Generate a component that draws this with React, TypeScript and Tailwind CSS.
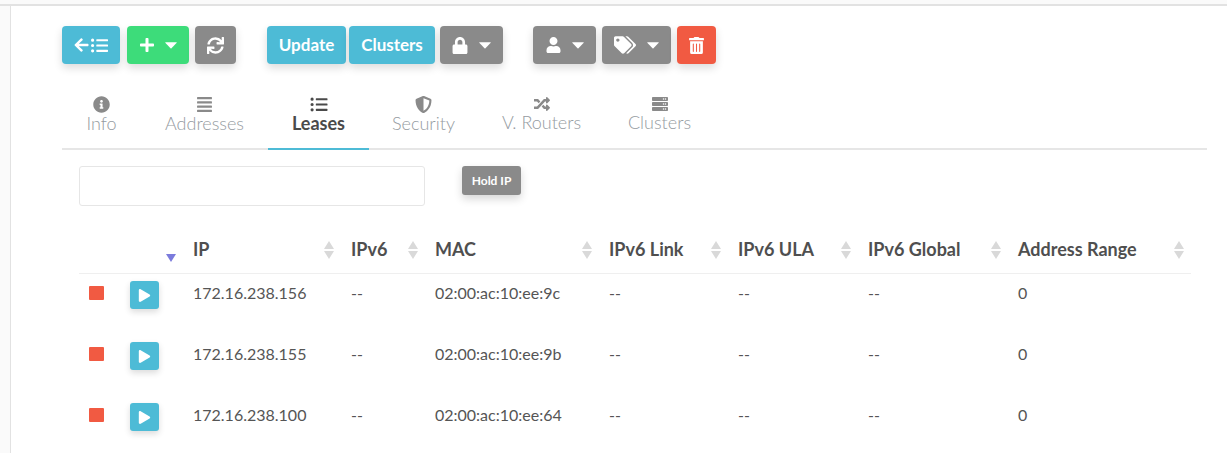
import type { ReactNode } from "react";
import {
  FaArrowLeft,
  FaInfoCircle,
  FaListUl,
  FaLock,
  FaPlay,
  FaPlus,
  FaRandom,
  FaServer,
  FaShieldAlt,
  FaSync,
  FaTags,
  FaTrashAlt,
  FaUser,
  FaAlignJustify,
} from "react-icons/fa";

const btn =
  "flex h-[38px] items-center justify-center rounded-[4px] text-[17px] font-bold text-white shadow-[0_4px_8px_rgba(0,0,0,0.14)]";

function Caret() {
  return (
    <svg viewBox="0 0 13 7" className="h-[7px] w-[12px] shrink-0" fill="currentColor">
      <path d="M0.5 0H12.5Q13 0 12.7 0.5L7 6.6Q6.5 7 6 6.6L0.3 0.5Q0 0 0.5 0Z" />
    </svg>
  );
}

function Toolbar() {
  return (
    <div className="flex items-center">
      <button className={`${btn} w-[58px] gap-[2px] bg-[#4dbbd6]`}>
        <FaArrowLeft className="h-[16px] w-[15px]" />
        <FaListUl className="h-[17px] w-[17px]" />
      </button>
      <button className={`${btn} ml-[7px] w-[62px] gap-[10px] bg-[#3ddc7a]`}>
        <FaPlus className="h-[16px] w-[16px]" />
        <Caret />
      </button>
      <button className={`${btn} ml-[6px] w-[41px] bg-[#8a8a8a]`}>
        <FaSync className="h-[17px] w-[17px]" />
      </button>
      <button className={`${btn} ml-[31px] w-[79px] bg-[#4dbbd6]`}>Update</button>
      <button className={`${btn} ml-[3px] w-[86px] bg-[#4dbbd6]`}>Clusters</button>
      <button className={`${btn} ml-[5px] w-[63px] gap-[11px] bg-[#8a8a8a]`}>
        <FaLock className="h-[17px] w-[16px]" />
        <Caret />
      </button>
      <button className={`${btn} ml-[30px] w-[63px] gap-[11px] bg-[#8a8a8a]`}>
        <FaUser className="h-[16px] w-[15px]" />
        <Caret />
      </button>
      <button className={`${btn} ml-[6px] w-[69px] gap-[11px] bg-[#8a8a8a]`}>
        <FaTags className="h-[18px] w-[22px]" />
        <Caret />
      </button>
      <button className={`${btn} ml-[6px] w-[39px] bg-[#f15a42]`}>
        <FaTrashAlt className="h-[17px] w-[15px]" />
      </button>
    </div>
  );
}

const tabs: { label: string; icon: ReactNode; width: string; active?: boolean }[] = [
  { label: "Info", icon: <FaInfoCircle className="h-[17px] w-[17px]" />, width: "w-[79px]" },
  { label: "Addresses", icon: <FaAlignJustify className="h-[17px] w-[17px]" />, width: "w-[127px]" },
  { label: "Leases", icon: <FaListUl className="h-[17px] w-[18px]" />, width: "w-[101px]", active: true },
  { label: "Security", icon: <FaShieldAlt className="h-[17px] w-[17px]" />, width: "w-[109px]" },
  { label: "V. Routers", icon: <FaRandom className="h-[16px] w-[18px]" />, width: "w-[127px]" },
  { label: "Clusters", icon: <FaServer className="h-[16px] w-[18px]" />, width: "w-[109px]" },
];

function Tabs() {
  return (
    <div className="mt-[32px] flex h-[54px] border-b-2 border-[#e6e6e6]">
      {tabs.map((t) => (
        <div
          key={t.label}
          className={`-mb-[2px] flex h-[54px] shrink-0 flex-col items-center border-b-2 ${t.width} ${
            t.active ? "border-[#4dbbd6]" : "border-transparent"
          }`}
        >
          <span className={t.active ? "text-[#4a4a4a]" : "text-[#8a8a8a]"}>{t.icon}</span>
          <span
            className={`text-[18px] leading-[20px] ${
              t.active ? "font-bold text-[#4a4a4a]" : "font-light text-[#959ba1]"
            }`}
          >
            {t.label}
          </span>
        </div>
      ))}
    </div>
  );
}

function SortArrows() {
  return (
    <svg viewBox="0 0 10 18" className="h-[18px] w-[10px] shrink-0 text-[#d9d9d9]" fill="currentColor">
      <path d="M5 0 10 8H0Z" />
      <path d="M5 18 0 10H10Z" />
    </svg>
  );
}

const columns = [
  { label: "IP", width: "w-[158px]" },
  { label: "IPv6", width: "w-[84px]" },
  { label: "MAC", width: "w-[174px]" },
  { label: "IPv6 Link", width: "w-[129px]" },
  { label: "IPv6 ULA", width: "w-[130px]" },
  { label: "IPv6 Global", width: "w-[150px]" },
  { label: "Address Range", width: "w-[183px]" },
];

const leases = [
  { ip: "172.16.238.156", mac: "02:00:ac:10:ee:9c" },
  { ip: "172.16.238.155", mac: "02:00:ac:10:ee:9b" },
  { ip: "172.16.238.100", mac: "02:00:ac:10:ee:64" },
];

function LeasesTable() {
  return (
    <table className="mt-[24px] ml-[17px] w-[1112px] table-fixed border-collapse text-left">
      <thead>
        <tr className="h-[43px] border-b border-[#efefef]">
          <th className="w-[51px]"></th>
          <th className="w-[53px] pr-[7px] pt-[14px] align-middle">
            <svg viewBox="0 0 10 8" className="ml-auto h-[8px] w-[10px] text-[#7b7bdc]" fill="currentColor">
              <path d="M0 0H10L5 8Z" />
            </svg>
          </th>
          {columns.map((c) => (
            <th key={c.label} className={`${c.width} p-0 pb-[3px] pl-[10px] text-[18px] font-bold text-[#4f4f4f]`}>
              <div className="flex items-center justify-between pr-[7px]">
                <span>{c.label}</span>
                <SortArrows />
              </div>
            </th>
          ))}
        </tr>
      </thead>
      <tbody className="text-[16px] text-[#555555]">
        {leases.map((l) => (
          <tr key={l.ip} className="h-[61px]">
            <td className="pb-[22px] pl-[10px]">
              <div className="h-[14px] w-[15px] rounded-[1px] bg-[#f15a42]" />
            </td>
            <td className="pb-[17px]">
              <button className="flex h-[28px] w-[29px] items-center justify-center rounded-[3px] bg-[#4dbbd6] text-white shadow-[0_3px_6px_rgba(0,0,0,0.14)]">
                <FaPlay className="h-[13px] w-[13px]" />
              </button>
            </td>
            <td className="pb-[22px] pl-[10px]">{l.ip}</td>
            <td className="pb-[22px] pl-[10px]">--</td>
            <td className="pb-[22px] pl-[10px]">{l.mac}</td>
            <td className="pb-[22px] pl-[10px]">--</td>
            <td className="pb-[22px] pl-[10px]">--</td>
            <td className="pb-[22px] pl-[10px]">--</td>
            <td className="pb-[22px] pl-[10px]">0</td>
          </tr>
        ))}
      </tbody>
    </table>
  );
}

export default function App() {
  return (
    <div className="h-[453px] w-[1227px] overflow-hidden bg-[#fafafa] pt-[4px] font-['Lato',sans-serif]">
      <div className="h-[449px] border-t-2 border-[#e2e2e2]">
        <div className="ml-[10px] h-full border-l border-[#e2e2e2] bg-white pl-[51px] pt-[20px]">
          <div className="w-[1145px]">
            <Toolbar />
            <Tabs />
            <div className="mt-[16px] flex items-start pl-[17px]">
              <input className="h-[40px] w-[346px] rounded-[3px] border border-[#e6e6e6] bg-white" />
              <button className="ml-[37px] h-[29px] w-[59px] rounded-[3px] bg-[#8a8a8a] text-[12px] font-bold text-white shadow-[0_4px_8px_rgba(0,0,0,0.16)]">
                Hold IP
              </button>
            </div>
            <LeasesTable />
          </div>
        </div>
      </div>
    </div>
  );
}
